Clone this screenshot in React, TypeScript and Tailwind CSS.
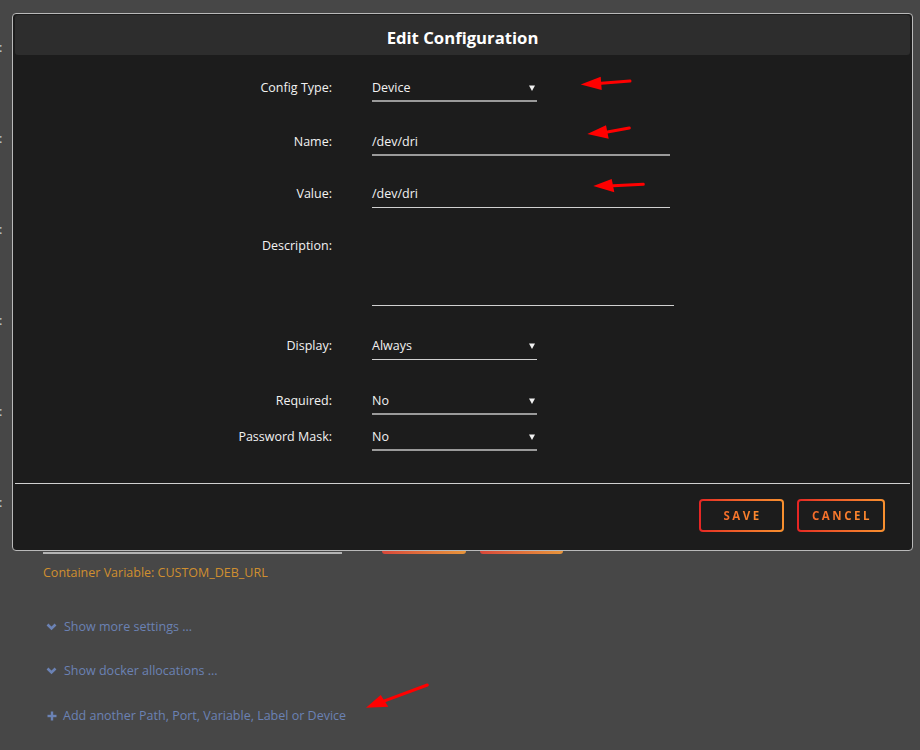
import React from "react";

const font = { fontFamily: '"Open Sans", "Liberation Sans", sans-serif' };

function Caret() {
  return (
    <svg width="6" height="6" viewBox="0 0 6 6" className="mr-[2px]">
      <polygon points="0,0.5 6,0.5 3,6" fill="#f0f0f0" />
    </svg>
  );
}

function SelectBox({ value, thick }: { value: string; thick?: boolean }) {
  return (
    <div
      className={
        "w-[165px] h-[28px] flex items-center justify-between pt-[2px] " +
        (thick ? "border-b-2 border-[#9a9a9a]" : "border-b border-[#d0d0d0] pb-[1px]")
      }
    >
      <span className="text-[12.5px] text-[#f2f2f2]">{value}</span>
      <Caret />
    </div>
  );
}

function Row({ label, children, cls }: { label: string; children: React.ReactNode; cls: string }) {
  return (
    <div className={"flex " + cls}>
      <div className="w-[319px] shrink-0 text-right text-[12.5px] text-[#f2f2f2] leading-[28px]">{label}</div>
      <div className="ml-[40px]">{children}</div>
    </div>
  );
}

function Arrow({ tip, top, bottom, tail }: { tip: number[]; top: number[]; bottom: number[]; tail: number[] }) {
  const bx = (top[0] + bottom[0]) / 2;
  const by = (top[1] + bottom[1]) / 2;
  return (
    <>
      <line x1={bx} y1={by} x2={tail[0]} y2={tail[1]} stroke="#ff0000" strokeWidth="3" strokeLinecap="round" />
      <polygon points={`${tip[0]},${tip[1]} ${top[0]},${top[1]} ${bottom[0]},${bottom[1]}`} fill="#ff0000" />
    </>
  );
}

function GradButton({ label, w }: { label: string; w: string }) {
  return (
    <div className={"h-[33px] rounded-[4px] p-[2px] bg-gradient-to-r from-[#e52424] to-[#f7902f] " + w}>
      <div className="w-full h-full rounded-[2px] bg-[#1c1c1c] flex items-center justify-center">
        <span className="text-[11.5px] font-bold tracking-[2.5px] pl-[2px] bg-gradient-to-r from-[#f46a2a] to-[#ff8c2f] bg-clip-text text-transparent">
          {label}
        </span>
      </div>
    </div>
  );
}

function Chevron() {
  return (
    <svg width="11" height="8" viewBox="0 0 11 8" className="ml-[3px] mr-[7px]">
      <polyline points="1.5,1.5 5.5,5.5 9.5,1.5" fill="none" stroke="#6b82b4" strokeWidth="2.6" />
    </svg>
  );
}

export default function App() {
  return (
    <div className="relative w-[920px] h-[750px] bg-[#474747] overflow-hidden" style={font}>
      {/* background page */}
      <div className="absolute left-0 top-0 flex flex-col pt-[2px]">
        {[0, 1, 2, 3, 4, 5].map((i) => (
          <div key={i} className="h-[91px] leading-[91px] text-[13px] text-[#cfcfcf] -ml-[1px]">:</div>
        ))}
      </div>
      <div className="pl-[43px] pt-[520px] flex flex-col">
        <div className="flex items-end h-[34px]">
          <div className="w-[299px] h-[30px] border-b-2 border-[#b4b4b4]" />
          <div className="ml-[40px] w-[84px] h-[30px] rounded-[3px] bg-gradient-to-r from-[#d9473a] to-[#e7943a]" />
          <div className="ml-[14px] w-[83px] h-[30px] rounded-[3px] bg-gradient-to-r from-[#d9473a] to-[#e7943a]" />
        </div>
        <div className="mt-[10px] text-[12.5px] text-[#d08f2f] leading-[18px]">Container Variable: CUSTOM_DEB_URL</div>
        <div className="mt-[36px] flex items-center text-[12.5px] text-[#6b82b4] leading-[18px]">
          <Chevron />
          Show more settings ...
        </div>
        <div className="mt-[26px] flex items-center text-[12.5px] text-[#6b82b4] leading-[18px]">
          <Chevron />
          Show docker allocations ...
        </div>
        <div className="mt-[27px] flex items-center text-[12.5px] text-[#6b82b4] leading-[18px]">
          <svg width="10" height="10" viewBox="0 0 10 10" className="ml-[4px] mr-[6px]">
            <rect x="3.8" y="0.5" width="2.4" height="9" fill="#6b82b4" />
            <rect x="0.5" y="3.8" width="9" height="2.4" fill="#6b82b4" />
          </svg>
          Add another Path, Port, Variable, Label or Device
        </div>
      </div>

      {/* modal */}
      <div className="absolute left-[12px] top-[13px] w-[901px] h-[538px] rounded-[4px] border border-[#b9b9b9] bg-[#1c1c1c] flex flex-col">
        <div className="mx-[2px] mt-[1px] h-[40px] rounded-[3px] bg-[#2d2d2d] flex items-center justify-center pt-[5px]">
          <span className="text-[16.7px] font-bold text-white">Edit Configuration</span>
        </div>
        <div className="flex flex-col">
          <Row label="Config Type:" cls="mt-[19px]">
            <SelectBox value="Device" thick />
          </Row>
          <Row label="Name:" cls="mt-[26px]">
            <div className="w-[298px] h-[28px] border-b-2 border-[#9a9a9a] flex items-center pt-[2px]">
              <span className="text-[12.5px] text-[#f2f2f2]">/dev/dri</span>
            </div>
          </Row>
          <Row label="Value:" cls="mt-[24px]">
            <div className="w-[298px] h-[28px] border-b border-[#d0d0d0] flex items-center pt-[2px] pb-[1px]">
              <span className="text-[12.5px] text-[#f2f2f2]">/dev/dri</span>
            </div>
          </Row>
          <Row label="Description:" cls="mt-[24px]">
            <div className="w-[302px] h-[74px] border-b border-[#d0d0d0]" />
          </Row>
          <Row label="Display:" cls="mt-[26px]">
            <SelectBox value="Always" />
          </Row>
          <Row label="Required:" cls="mt-[27px]">
            <SelectBox value="No" thick />
          </Row>
          <Row label="Password Mask:" cls="mt-[8px]">
            <SelectBox value="No" thick />
          </Row>
        </div>
        <div className="mt-[32px] mx-[2px] h-px bg-[#d0d0d0]" />
        <div className="flex justify-end gap-[13px] pr-[27px] mt-[15px]">
          <GradButton label="SAVE" w="w-[85px]" />
          <GradButton label="CANCEL" w="w-[88px]" />
        </div>
      </div>

      {/* annotation arrows */}
      <svg className="absolute left-0 top-0 pointer-events-none" width="920" height="750">
        <Arrow tip={[580.7, 84.5]} top={[600.7, 76.7]} bottom={[601.7, 90]} tail={[630, 81]} />
        <Arrow tip={[587.3, 134]} top={[606, 125.3]} bottom={[608.7, 138.7]} tail={[629.3, 128]} />
        <Arrow tip={[593.3, 186]} top={[611.7, 179]} bottom={[614.3, 192.3]} tail={[643.3, 184.3]} />
        <Arrow tip={[366, 707.7]} top={[380.7, 695]} bottom={[388.3, 706.7]} tail={[427.3, 685]} />
      </svg>
    </div>
  );
}
